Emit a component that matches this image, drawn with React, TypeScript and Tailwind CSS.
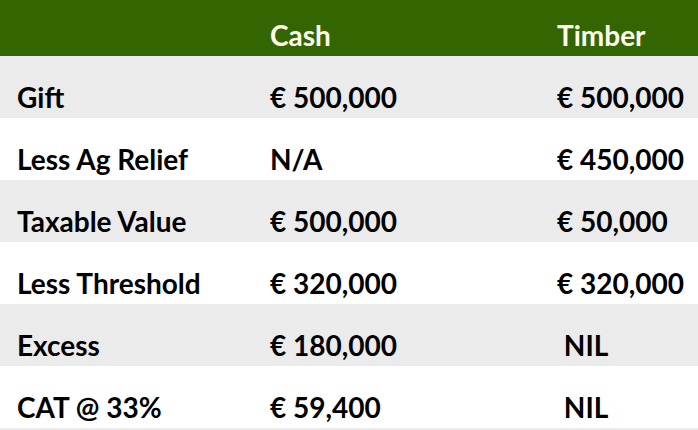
import React from "react";

const rows: [string, string, string][] = [
  ["Gift", "€ 500,000", "€ 500,000"],
  ["Less Ag Relief", "N/A", "€ 450,000"],
  ["Taxable Value", "€ 500,000", "€ 50,000"],
  ["Less Threshold", "€ 320,000", "€ 320,000"],
  ["Excess", "€ 180,000", "\u00a0NIL"],
  ["CAT @ 33%", "€ 59,400", "\u00a0NIL"],
];

export default function App() {
  return (
    <div
      className="w-[698px] h-[430px] bg-[#ebebeb] overflow-hidden font-bold text-[28px] leading-none"
      style={{ fontFamily: "Lato, 'Noto Sans', sans-serif" }}
    >
      <div className="h-[56px] bg-[#336600] text-[#fffff0] grid grid-cols-[253px_287px_1fr] pl-[17px] items-end pb-[7px]">
        <div></div>
        <div>Cash</div>
        <div>Timber</div>
      </div>
      {rows.map((r, i) => (
        <div
          key={i}
          className={`h-[62px] grid grid-cols-[253px_287px_1fr] pl-[17px] items-end pb-[7px] text-black ${
            i % 2 === 0 ? "bg-[#ebebeb]" : "bg-white"
          }`}
        >
          <div>{r[0]}</div>
          <div>{r[1]}</div>
          <div>{r[2]}</div>
        </div>
      ))}
    </div>
  );
}
